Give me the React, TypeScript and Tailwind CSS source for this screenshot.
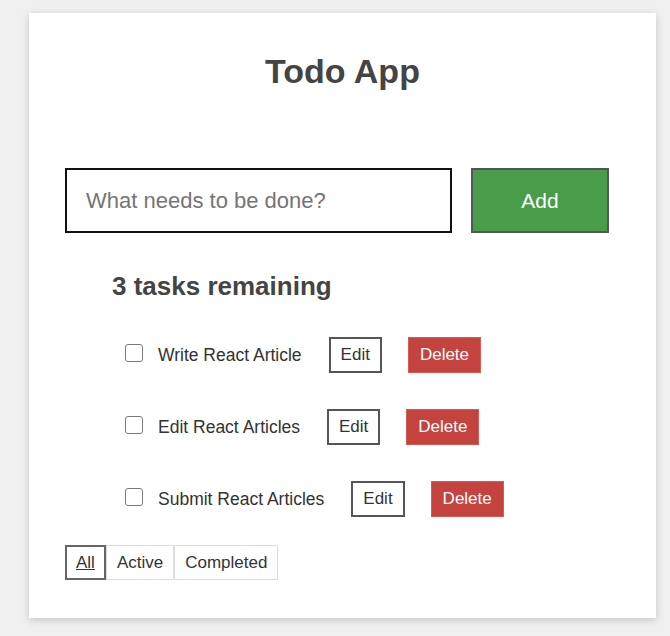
import React, { useState } from 'react';

type Task = { id: number; name: string; completed: boolean };

const initialTasks: Task[] = [
  { id: 1, name: 'Write React Article', completed: false },
  { id: 2, name: 'Edit React Articles', completed: false },
  { id: 3, name: 'Submit React Articles', completed: false },
];

function TodoRow({ task, onToggle, onDelete }: { task: Task; onToggle: () => void; onDelete: () => void }) {
  return (
    <li className="flex items-center h-[36px]">
      <input
        type="checkbox"
        checked={task.completed}
        onChange={onToggle}
        className="appearance-none w-[18px] h-[18px] mb-[5px] border border-[#7a7a7a] rounded-[3px] bg-white checked:bg-[#4a9d48] shrink-0"
      />
      <label className="ml-[15px] text-[17.5px] text-[#333]">{task.name}</label>
      <button className="ml-[27px] h-[36px] px-[10px] border-2 border-[#555] bg-white text-[17px] text-[#333]">
        Edit
      </button>
      <button
        onClick={onDelete}
        className="ml-[26px] h-[36px] px-[11px] border border-[#d65a56] bg-[#c4433f] text-[17px] text-white"
      >
        Delete
      </button>
    </li>
  );
}

export default function App() {
  const [tasks, setTasks] = useState<Task[]>(initialTasks);
  const [text, setText] = useState('');
  const [filter, setFilter] = useState('All');

  const addTask = () => {
    if (!text.trim()) return;
    setTasks([...tasks, { id: Date.now(), name: text, completed: false }]);
    setText('');
  };

  const remaining = tasks.filter(t => !t.completed).length;

  return (
    <div
      className="min-h-[636px] bg-[#f0f0f0] pt-[13px] pb-[18px]"
      style={{ fontFamily: '"Liberation Sans", Arial, sans-serif' }}
    >
      <div className="ml-[29px] w-[627px] h-[605px] bg-white shadow-[0_2px_8px_rgba(0,0,0,0.18)] pt-[39px]">
        <h1 className="text-center text-[34px] leading-[39px] font-bold text-[#444]">Todo App</h1>

        <form
          className="flex mt-[77px] ml-[36px]"
          onSubmit={e => {
            e.preventDefault();
            addTask();
          }}
        >
          <input
            type="text"
            value={text}
            onChange={e => setText(e.target.value)}
            placeholder="What needs to be done?"
            className="w-[387px] h-[65px] border-2 border-[#111] px-[19px] text-[22px] text-[#333] placeholder:text-[#757575] outline-none"
          />
          <button
            type="submit"
            className="ml-[19px] w-[138px] h-[65px] border-2 border-[#555] bg-[#4a9d48] text-[21px] text-white"
          >
            Add
          </button>
        </form>

        <h2 className="mt-[38px] ml-[83px] text-[26px] leading-[30px] font-bold text-[#444]">
          {remaining} tasks remaining
        </h2>

        <ul className="mt-[36px] ml-[96px] flex flex-col gap-[36px]">
          {tasks.map(task => (
            <TodoRow
              key={task.id}
              task={task}
              onToggle={() => setTasks(tasks.map(t => (t.id === task.id ? { ...t, completed: !t.completed } : t)))}
              onDelete={() => setTasks(tasks.filter(t => t.id !== task.id))}
            />
          ))}
        </ul>

        <div className="flex mt-[28px] ml-[36px]">
          {['All', 'Active', 'Completed'].map(name => (
            <button
              key={name}
              onClick={() => setFilter(name)}
              className={
                filter === name
                  ? 'h-[35px] px-[9px] border-2 border-[#666] text-[17px] text-[#333] underline'
                  : 'h-[35px] px-[10px] border border-[#ddd] text-[17px] text-[#333]'
              }
            >
              {name}
            </button>
          ))}
        </div>
      </div>
    </div>
  );
}
